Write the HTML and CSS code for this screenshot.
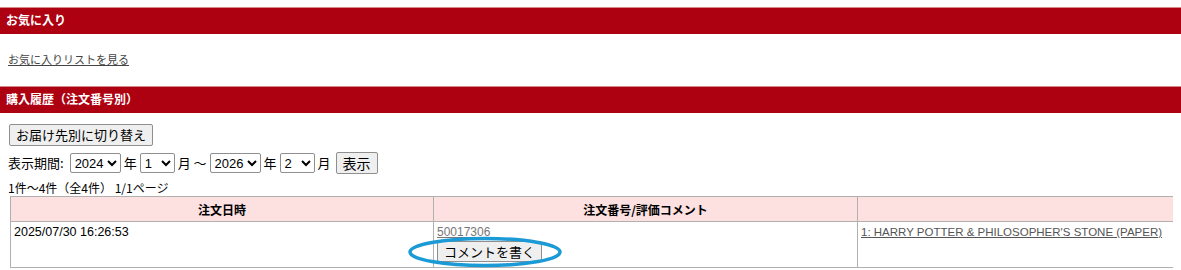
FILE: index.html
```html
<!DOCTYPE html>
<html lang="ja">
<head>
    <meta charset="UTF-8">
    <title>マイページ</title>
    <link rel="stylesheet" href="styles.css">
</head>
<body>
    <h2 class="bar first">お気に入り</h2>
    <div class="section fav">
        <a href="#" class="link">お気に入りリストを見る</a>
    </div>

    <h2 class="bar">購入履歴（注文番号別）</h2>
    <div class="section">
        <button class="btn">お届け先別に切り替え</button>

        <form class="period">
            <span>表示期間:</span>
            <select class="sel year"><option>2024</option></select>
            <span>年</span>
            <select class="sel month"><option>1</option></select>
            <span>月 〜</span>
            <select class="sel year"><option>2026</option></select>
            <span>年</span>
            <select class="sel month"><option>2</option></select>
            <span>月</span>
            <button type="button" class="btn show">表示</button>
        </form>

        <p class="count">1件〜4件（全4件） 1/1ページ</p>

        <div class="history">
            <table class="orders">
                <thead>
                    <tr>
                        <th class="c1">注文日時</th>
                        <th class="c2">注文番号/評価コメント</th>
                        <th></th>
                    </tr>
                </thead>
                <tbody>
                    <tr>
                        <td class="date">2025/07/30 16:26:53</td>
                        <td class="order-cell">
                            <a href="#" class="order-no">50017306</a>
                            <div class="comment">
                                <button class="btn small">コメントを書く</button>
                                <!-- hand-drawn annotation ring -->
                                <svg class="ring" width="160" height="34" viewBox="0 0 160 34">
                                    <ellipse cx="80" cy="17" rx="75" ry="13.5" fill="none" stroke="#1b9ad6" stroke-width="3.5"/>
                                </svg>
                            </div>
                        </td>
                        <td><a href="#" class="item">1: HARRY POTTER &amp; PHILOSOPHER'S STONE (PAPER)</a></td>
                    </tr>
                </tbody>
            </table>
        </div>
    </div>
</body>
</html>
```

FILE: styles.css
```css
body {
    margin: 0;
    font-family: "Liberation Sans", "Noto Sans CJK JP", sans-serif;
    font-size: 12px;
    color: #000;
    background: #fff;
}

.bar {
    margin: 0;
    height: 26px;
    line-height: 26px;
    padding: 0 6px;
    background-color: #ad0010;
    border-top: 1px solid #d58a8a;
    color: #fff;
    font-size: 12px;
    font-weight: bold;
}

.bar.first {
    margin-top: 7px;
}

.section {
    padding: 0 8px;
}

.fav {
    box-sizing: border-box;
    height: 52px;
    padding-top: 17px;
    line-height: 16px;
}

.link {
    color: #444;
    font-family: "Noto Sans CJK JP", sans-serif;
    font-size: 11px;
}

.btn {
    font-family: "Noto Sans CJK JP", sans-serif;
    font-size: 13px;
    line-height: 16px;
    background-color: #efefef;
    border: 1px solid #8f8f8f;
    border-radius: 2px;
    padding: 2px 6px;
    margin: 0;
    color: #000;
}

.section > .btn {
    margin-top: 11px;
    margin-left: 1px;
    height: 22px;
}

.period {
    display: flex;
    align-items: center;
    gap: 3px;
    margin-top: 6px;
    height: 22px;
    font-family: "Noto Sans CJK JP", sans-serif;
    font-size: 13px;
}

.period span {
    line-height: 16px;
}

.period span:first-child {
    margin-right: 3px;
}

.sel {
    height: 20px;
    font-family: "Liberation Sans", sans-serif;
    font-size: 13px;
    border: 1px solid #8f8f8f;
    border-radius: 2px;
    background: #fff;
    padding: 0;
    color: #000;
}

.sel.month {
    width: 35px;
}

.btn.show {
    height: 22px;
    margin-left: 2px;
    font-size: 14px;
}

.count {
    margin: 6px 0 0;
    line-height: 16px;
    font-family: "Noto Sans CJK JP", sans-serif;
    font-size: 12px;
}

.history {
    margin-left: 2px;
    overflow: hidden;
}

.orders {
    border-collapse: collapse;
    width: 1262px;
    table-layout: fixed;
}

.orders th,
.orders td {
    border: 1px solid #b0b0b0;
    padding: 2px 3px;
    text-align: left;
    vertical-align: top;
}

.orders th {
    height: 20px;
    background-color: #fde0e0;
    text-align: center;
    vertical-align: middle;
    font-family: "Noto Sans CJK JP", sans-serif;
    font-size: 12px;
    font-weight: bold;
}

.orders .c1 {
    width: 416px;
}

.orders .c2 {
    width: 417px;
}

.orders td {
    height: 40px;
    padding-top: 3px;
    font-size: 11.5px;
    line-height: 14px;
}

.orders td.date {
    font-size: 12.5px;
}

.order-no {
    color: #777;
    font-size: 12px;
}

.item {
    color: #555;
}

.comment {
    position: relative;
    margin-top: 2px;
    margin-bottom: 2px;
}

.btn.small {
    height: 21px;
    padding: 1px 6px;
    font-size: 13px;
}

.ring {
    position: absolute;
    left: -32px;
    top: -6px;
    pointer-events: none;
}
```
